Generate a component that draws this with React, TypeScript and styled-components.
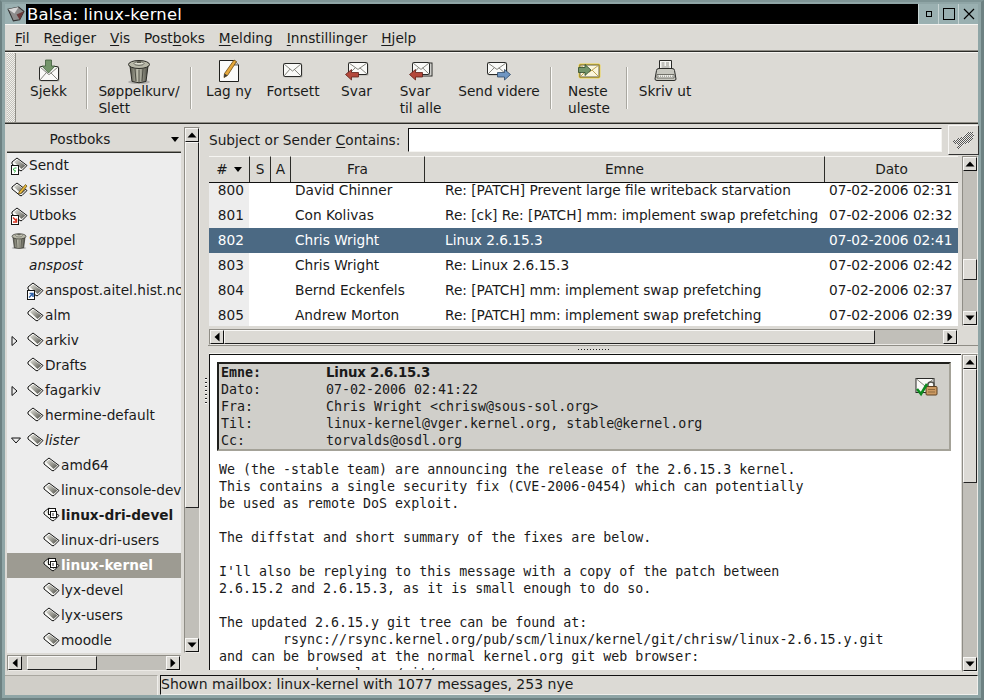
import React from 'react';
import styled, { createGlobalStyle } from 'styled-components';

const Global = createGlobalStyle`
  html, body { margin: 0; padding: 0; background: #8fa5a6; }
  * { box-sizing: border-box; }
  u { text-decoration-thickness: 1px; text-underline-offset: 2px; text-decoration-skip-ink: none; }
`;

const BG = '#dcdad5';
const TROUGH = '#c1bfb9';

const Window = styled.div`
  width: 984px; height: 700px;
  display: flex; flex-direction: column; overflow: hidden;
  background: #8fa5a6; border-right: 3px solid #6d8182; border-left: 2px solid #6d8182; border-bottom: 2px solid #6d8182;
  border-top: 2px solid #7f9596; padding: 2px 3px 3px 3px;
  font-family: "DejaVu Sans", sans-serif; font-size: 13.7px; color: #1a1a1a; line-height: 17px;
`;
const TitleBar = styled.div`
  height: 21px; flex: none; display: flex; border-bottom: 1px solid #f4f3f0; background: #000;
`;
const TitleIcon = styled.div`
  width: 21px; background: #9ab0b1; display: flex; align-items: center; justify-content: center;
`;
const TitleText = styled.div`
  flex: 1; color: #fff; font-size: 16.4px; line-height: 21px; padding-left: 1px; letter-spacing: 0.2px;
`;
const TitleButton = styled.div`
  width: 20px; background: #9ab0b1; border-left: 1px solid #c6d3d3; display: flex; align-items: center; justify-content: center; color: #000;
`;
const MenuBar = styled.div`
  height: 27px; flex: none; background: ${BG}; display: flex; gap: 14px; align-items: center; padding: 0 0 0 10px;
  border-bottom: 1px solid #2c2c28; box-shadow: inset 0 -1px 0 #8f8d86;
`;
const MenuItem = styled.span``;
const Toolbar = styled.div`
  height: 72px; flex: none; background: ${BG}; display: flex; border-bottom: 1px solid #2c2c28; border-top: 1px solid #f6f5f2;
  box-shadow: inset 0 -1px 0 #8f8d86;
`;
const Grip = styled.div`
  width: 9px; margin: 0 0 1px 2px; flex: none; border-right: 1px solid #8f8d86;
  background: conic-gradient(#c4c2bc 25%, #f1f0ec 0 50%, #c4c2bc 0 75%, #f1f0ec 0) 0 0 / 2px 2px;
`;
const ToolButton = styled.div<{ $w: number }>`
  width: ${p => p.$w}px; flex: none; display: flex; flex-direction: column; align-items: center; padding-top: 5px;
`;
const ToolIconSlot = styled.div`
  height: 25px; display: flex; align-items: center; justify-content: center;
`;
const ToolLabel = styled.div`
  white-space: pre; text-align: left; line-height: 17px;
`;
const ToolSep = styled.div`
  width: 12px; flex: none; display: flex; justify-content: center; padding: 14px 0 14px;
  &::before { content: ''; width: 2px; background: linear-gradient(to right, #a9a7a0 50%, #fbfaf8 50%); }
`;
const Body = styled.div`
  flex: 1; min-height: 0; display: flex; background: ${BG};
`;
const Sidebar = styled.div`
  width: 198px; flex: none; padding: 3px 1px 1px 2px; display: grid;
  grid-template-columns: 174px 16px; column-gap: 3px; grid-template-rows: 526px 16px; row-gap: 2px;
`;
const Tree = styled.div`
  background: #ededed; overflow: hidden; display: flex; flex-direction: column;
`;
const TreeHead = styled.div`
  height: 26px; flex: none; background: ${BG}; border-bottom: 1px solid #2c2c28; box-shadow: inset 0 -1px 0 #8f8d86;
  position: relative; text-align: center; line-height: 24px; padding-right: 28px;
`;
const HeadArrow = styled.span`
  position: absolute; right: 2px; top: 10px; width: 0; height: 0;
  border-left: 4.5px solid transparent; border-right: 4.5px solid transparent; border-top: 5px solid #000;
`;
const TreeRow = styled.div<{ $sel?: boolean; $bold?: boolean; $it?: boolean }>`
  height: 25px; flex: none; display: flex; align-items: center; padding-left: 4px; white-space: nowrap; overflow: hidden;
  background: ${p => (p.$sel ? '#9d9b92' : 'transparent')};
  color: ${p => (p.$sel ? '#fff' : '#1a1a1a')};
  font-weight: ${p => (p.$bold ? 700 : 400)};
  font-style: ${p => (p.$it ? 'italic' : 'normal')};
`;
const Indent = styled.div<{ $d: number }>`
  width: ${p => p.$d * 16}px; flex: none; display: flex; align-items: center; overflow: hidden;
`;
const TreeIconSlot = styled.div`
  width: 18px; height: 18px; flex: none; display: flex; align-items: center;
`;
const VBar = styled.div`
  background: ${TROUGH}; display: flex; flex-direction: column; border: 1px solid #8f8d86; border-right-color: #eceae6; border-bottom-color: #eceae6;
`;
const HBar = styled(VBar)`
  flex-direction: row;
`;
const ArrowBtn = styled.div`
  width: 14px; height: 14px; flex: none; background: ${BG}; display: flex; align-items: center; justify-content: center;
  border: 1px solid; border-color: #f8f7f5 #111 #111 #f8f7f5;
`;
const Thumb = styled.div<{ $size: number }>`
  flex: none; ${p => `flex-basis: ${p.$size}px;`} background: ${BG};
  border: 1px solid; border-color: #f8f7f5 #222 #222 #f8f7f5;
`;
const Spacer = styled.div<{ $size?: number }>`
  ${p => (p.$size !== undefined ? `flex: none; flex-basis: ${p.$size}px;` : 'flex: 1;')}
`;
const VHandle = styled.div`
  width: 5px; flex: none; display: flex; align-items: center; justify-content: center; padding-bottom: 13px;
  &::before { content: ''; width: 2px; height: 27px; background-image: repeating-linear-gradient(to bottom, #222 0 1px, #fff 1px 2px, transparent 2px 4px); }
`;
const Main = styled.div`
  width: 770px; flex: none; display: flex; flex-direction: column;
`;
const SearchRow = styled.div`
  height: 32px; flex: none; display: flex; align-items: center; padding-left: 1px; gap: 6px; white-space: nowrap;
`;
const SearchLabel = styled.label`
  width: 193px; flex: none;
`;
const SearchInput = styled.div`
  width: 534px; height: 24px; background: #fff; border: 1px solid; border-color: #111 #f5f4f1 #f5f4f1 #111; flex: none;
`;
const SearchButton = styled.div`
  width: 31px; height: 30px; flex: none; display: flex; align-items: center; justify-content: center; background: ${BG};
  border: 1px solid; border-color: #f8f7f5 #333 #333 #f8f7f5;
`;
const ListFrame = styled.div`
  flex: none; padding-left: 1px; display: grid; grid-template-columns: 749px 16px; column-gap: 4px; grid-template-rows: 170px 16px; row-gap: 3px;
  border-bottom: 1px solid #8f8d86; height: 190px;
`;
const Table = styled.div`
  display: flex; flex-direction: column; overflow: hidden;
`;
const cols = '41px 21px 20px 134px 400px 133px';
const HeadRow = styled.div`
  display: grid; grid-template-columns: ${cols}; height: 27px; flex: none; position: relative; z-index: 1;
  border-bottom: 1px solid #111; background: ${BG};
`;
const HeadCell = styled.div`
  display: flex; align-items: center; justify-content: center; gap: 6px; border-right: 1px solid #2c2c28; border-top: 1px solid #f6f5f2;
  &:last-child { border-right: none; }
`;
const SmallDown = styled.span`
  width: 0; height: 0; border-left: 4.5px solid transparent; border-right: 4.5px solid transparent; border-top: 5px solid #000;
`;
const Rows = styled.div`
  flex: 1; overflow: hidden; background: #fff; margin-top: -5px;
`;
const Row = styled.div<{ $sel?: boolean }>`
  display: grid; grid-template-columns: ${cols}; height: 25px; align-items: center; white-space: nowrap;
  background: ${p => (p.$sel ? '#4b6983' : '#fff')}; color: ${p => (p.$sel ? '#fff' : '#1a1a1a')};
`;
const NumCell = styled.div<{ $sel?: boolean }>`
  height: 25px; line-height: 25px; text-align: right; padding-right: 5px; background: ${p => (p.$sel ? '#4b6983' : '#ededed')};
  margin-right: 1px;
`;
const Cell = styled.div<{ $pad: number }>`
  padding-left: ${p => p.$pad}px; overflow: hidden;
`;
const HPaneHandle = styled.div`
  height: 7px; flex: none; display: flex; justify-content: center; align-items: center; padding-right: 0;
  &::before { content: ''; width: 32px; height: 3px; background-image: radial-gradient(#222 0.7px, transparent 0.8px); background-size: 3px 3px; }
`;
const Preview = styled.div`
  flex: 1; min-height: 0; margin-left: 1px; display: grid; grid-template-columns: 1fr 16px; grid-template-rows: 100%; column-gap: 1px; padding-right: 0;
  border-top: 1px solid #f6f5f2;
`;
const PreviewText = styled.div`
  background: #fff; border-top: 1px solid #111; border-left: 1px solid #111; padding: 7px 10px 0 7px; overflow: hidden; margin-bottom: 2px;
  font-family: "DejaVu Sans Mono", monospace; font-size: 13.3px; line-height: 17px; color: #1a1a1a;
`;
const HeaderBox = styled.div`
  height: 89px; background: #d0cfca; border: 2px solid; border-color: #1f1f1c #a4a298 #a4a298 #1f1f1c; padding: 0 2px; position: relative;
  display: grid; grid-template-columns: 105px 1fr; grid-auto-rows: 17px;
`;
const HLabel = styled.div<{ $bold?: boolean }>`
  font-weight: ${p => (p.$bold ? 700 : 400)};
`;
const HValue = styled.div<{ $bold?: boolean }>`
  ${p => p.$bold && 'font-family: "DejaVu Sans", sans-serif; font-weight: 700; font-size: 13.33px; letter-spacing: -0.2px;'}
`;
const SigIcon = styled.div`
  position: absolute; right: 11px; top: 13px;
`;
const MailBody = styled.pre`
  margin: 10px 0 0 2px; font: inherit; white-space: pre;
`;
const Status = styled.div`
  height: 23px; flex: none; background: ${BG}; display: flex; gap: 2px; padding-top: 3px; align-items: stretch;
`;
const StatusBlank = styled.div`
  width: 153px; flex: none; background: #d0cec8; border-top: 1px solid #a9a7a0; border-right: 1px solid #f0efec;
`;
const StatusText = styled.div`
  flex: 1; border: 1px solid; border-color: #111 #f0efec #f0efec #111; line-height: 17px; white-space: nowrap; padding-top: 0;
  font-size: 14px;
`;

const Up = () => <svg width="10" height="6" viewBox="0 0 10 6"><path d="M5 0.5L9.5 5.5H0.5Z" fill="#000" /></svg>;
const Down = () => <svg width="10" height="6" viewBox="0 0 10 6"><path d="M5 5.5L9.5 0.5H0.5Z" fill="#000" /></svg>;
const Left = () => <svg width="6" height="10" viewBox="0 0 6 10"><path d="M0.5 5L5.5 0.5V9.5Z" fill="#000" /></svg>;
const Right = () => <svg width="6" height="10" viewBox="0 0 6 10"><path d="M5.5 5L0.5 0.5V9.5Z" fill="#000" /></svg>;

const Env = ({ x = 0, y = 0, w = 18, h = 13 }: { x?: number; y?: number; w?: number; h?: number }) => (
  <g>
    <rect x={x + 1.5} y={y + 1.5} width={w} height={h} rx="1" fill="#9b9b96" opacity="0.6" />
    <rect x={x + 0.5} y={y + 0.5} width={w} height={h} rx="1" fill="#fafaf8" stroke="#2a2a28" />
    <path d={`M${x + 1} ${y + 1}L${x + w / 2 + 0.5} ${y + h * 0.62}L${x + w} ${y + 1}M${x + 1} ${y + h}L${x + w * 0.38} ${y + h * 0.48}M${x + w} ${y + h}L${x + w * 0.62} ${y + h * 0.48}`} fill="none" stroke="#77776f" strokeWidth="0.9" />
  </g>
);
const ArrowLeft = ({ x, y, c, o }: { x: number; y: number; c: string; o: string }) => (
  <path d={`M${x} ${y + 5}l6 -5v3h7v4.5h-7v3z`} fill={c} stroke={o} strokeWidth="0.8" strokeLinejoin="round" />
);
const ArrowRight = ({ x, y, c, o }: { x: number; y: number; c: string; o: string }) => (
  <path d={`M${x + 13} ${y + 5}l-6 -5v3h-7v4.5h7v3z`} fill={c} stroke={o} strokeWidth="0.8" strokeLinejoin="round" />
);

const Check = () => (
  <svg width="22" height="23" viewBox="0 0 22 23">
    <Env x={1} y={7} w={19} h={14} />
    <path d="M7.500 1h6v6h3.500l-6.500 7-6.500-7h3.500z" fill="#74956a" stroke="#3f5a3b" strokeWidth="0.8" />
  </svg>
);
const Trash = ({ s = 24 }: { s?: number }) => (
  <svg width={s} height={s * 26 / 24} viewBox="0 0 24 26">
    <defs>
      <linearGradient id="tr" x1="0" x2="1" y1="0" y2="0">
        <stop offset="0" stopColor="#55554a" /><stop offset="0.45" stopColor="#c4c4b4" /><stop offset="1" stopColor="#4d4d44" />
      </linearGradient>
    </defs>
    <ellipse cx="12" cy="24" rx="11" ry="2" fill="#888" opacity="0.5" />
    <path d="M3 8L5 23.500Q12 26 19 23.500L21 8Z" fill="url(#tr)" stroke="#2b2b26" />
    <path d="M8 11l1 12M12 11.500v12.500M16 11l-1 12" stroke="#4c4c42" fill="none" />
    <ellipse cx="12" cy="6.500" rx="10.500" ry="4" fill="#b8b8a8" stroke="#2b2b26" />
    <ellipse cx="12" cy="5.500" rx="5" ry="1.800" fill="#deded0" stroke="#45453d" strokeWidth="0.8" />
    <path d="M10 3.500h4v1.500h-4z" fill="#55554a" />
  </svg>
);
const NewNote = () => (
  <svg width="24" height="25" viewBox="0 0 24 25">
    <path d="M2.500 2.500H17L21.500 7V23.500H2.500Z" fill="#fbfbf9" stroke="#1f1f1c" />
    <path d="M17 2.500V7H21.500" fill="#cfcfc9" stroke="#1f1f1c" strokeWidth="0.7" />
    <path d="M17 2L19.500 3.500L10.500 17.500L7 19.500L7.500 15.500Z" fill="#e6a83a" stroke="#6a4a12" strokeWidth="0.8" />
    <path d="M7.500 15.500L7 19.500L10.500 17.500" fill="#3a3a36" />
  </svg>
);
const ReplyIcon = ({ all }: { all?: boolean }) => (
  <svg width="24" height="20" viewBox="0 0 24 20">
    {all && <rect x="5" y="2" width="18" height="13" fill="#e8e8e4" stroke="#2a2a28" />}
    <Env x={3} y={1} w={all ? 17 : 19} h={12} />
    <ArrowLeft x={0.5} y={8.5} c="#b4483b" o="#5f1f18" />
  </svg>
);
const ForwardIcon = () => (
  <svg width="24" height="20" viewBox="0 0 24 20">
    <Env x={0} y={1} w={19} h={12} />
    <ArrowRight x={10.5} y={8.5} c="#6f96c2" o="#2c4866" />
  </svg>
);
const NextIcon = () => (
  <svg width="23" height="17" viewBox="0 0 23 17">
    <rect x="0.500" y="1.500" width="22" height="15" rx="2" fill="#f2d648" />
    <rect x="2" y="3" width="19" height="12" fill="#fbf6dc" stroke="#3a3a2a" strokeWidth="0.8" />
    <path d="M2 3L11.500 10L21 3M2 15L9 8M21 15L14 8" fill="none" stroke="#b59c48" strokeWidth="0.9" />
    <path d="M13 8l-6 -5.500v3h-6.500v5h6.500v3z" fill="#74956a" stroke="#2f4a2c" strokeWidth="0.8" />
  </svg>
);
const Printer = () => (
  <svg width="23" height="23" viewBox="0 0 23 23">
    <path d="M5.500 1.500H17.500V11H5.500Z" fill="#f5f5f2" stroke="#2a2a28" />
    <path d="M7.500 4h3M12 4h3M7.500 6h3M12 6h3M7.500 8h8" stroke="#8a8a84" />
    <path d="M2.500 11.500Q2.500 9.500 5 9.500H18Q20.500 9.500 20.500 11.500L22 20Q22 21.500 20 21.500H3Q1 21.500 1 20Z" fill="#c8c8c0" stroke="#2a2a28" />
    <path d="M3 15.500H20V19H3Z" fill="#efefe9" stroke="#55554e" strokeWidth="0.8" />
    <path d="M4 17.200h15" stroke="#8a8a84" strokeDasharray="1 1" />
  </svg>
);
const Book = () => (
  <g>
    <defs>
      <linearGradient id="bk" x1="0" y1="0" x2="1" y2="1">
        <stop offset="0" stopColor="#e4e4dc" /><stop offset="1" stopColor="#4f4f48" />
      </linearGradient>
    </defs>
    <path d="M1 5L6 1L16 8.500L11 13.500Q10 14 9 13.500L1 7Z" fill="#fbfbf8" stroke="#111" strokeLinejoin="round" />
    <path d="M3 5L6.300 2.500L14.500 8.500L10.500 12Z" fill="url(#bk)" />
  </g>
);
const Mailbox = ({ badge }: { badge?: string }) => (
  <svg width="17" height="18" viewBox="0 0 17 18">
    <Book />
    {badge === 'sent' && <g><rect x="0.500" y="8.500" width="7" height="9" fill="#fff" stroke="#151513" /><path d="M5.500 11Q3 10.500 2.500 12T4 13.500T3 15.500" fill="none" stroke="#39b54a" strokeWidth="1" /></g>}
    {badge === 'out' && <g><rect x="0.500" y="8.500" width="7" height="9" fill="#fff" stroke="#151513" /><path d="M2 10.500L5.500 14M5.500 11.500V15H2" fill="none" stroke="#d6321f" strokeWidth="1.500" /></g>}
    {badge === 'link' && <g><rect x="0.500" y="8.500" width="7" height="9" fill="#fff" stroke="#151513" /><path d="M2 15.500L5.500 12M2.500 11.500H6V15" fill="none" stroke="#2f62a8" strokeWidth="1.500" /></g>}
    {badge === 'draft' && <path d="M8 10L14.500 2.500L16 4L10 11.500L7.500 12Z" fill="#e8b93a" stroke="#5a4410" strokeWidth="0.7" />}
    {badge === 'new' && <g><rect x="5.500" y="1.500" width="7" height="6" fill="#fff" stroke="#151513" /><rect x="7.500" y="4.500" width="6" height="6" fill="#fff" stroke="#151513" /><path d="M10 6v3" stroke="#333" /></g>}
  </svg>
);
const HandIcon = () => (
  <svg width="21" height="18" viewBox="0 0 21 18" shapeRendering="crispEdges">
    <defs>
      <pattern id="dith" width="2" height="2" patternUnits="userSpaceOnUse">
        <rect width="2" height="2" fill="#efeeea" /><rect width="1" height="1" fill="#555" /><rect x="1" y="1" width="1" height="1" fill="#555" />
      </pattern>
    </defs>
    <path d="M0 10L6 7L10 6L14 1H20L21 5L17 12L11 13L6 18H4L5 14L2 13Z" fill="url(#dith)" />
  </svg>
);
const SigSvg = () => (
  <svg width="23" height="21" viewBox="0 0 23 21">
    <rect x="1" y="1.500" width="18" height="14" fill="#fafaf8" stroke="#2a2a28" />
    <path d="M1.500 2L10 9L18.500 2" fill="none" stroke="#88887f" />
    <path d="M13 9V7.500Q13 5 16 5T19 7.500V9" fill="none" stroke="#55554e" strokeWidth="1.500" />
    <rect x="11" y="9.500" width="11" height="8.500" rx="1" fill="#cc9a62" stroke="#5d4020" />
    <path d="M13 12.500h7M13 15h7" stroke="#8f6a3e" />
    <path d="M2 12L6 17L12 7" fill="none" stroke="#0d8a1f" strokeWidth="2.600" />
  </svg>
);
const Expander = ({ open }: { open?: boolean }) =>
  open ? (
    <svg width="10" height="7" viewBox="0 0 10 7"><path d="M0.500 1H9.500L5 6Z" fill="#ededed" stroke="#111" /></svg>
  ) : (
    <svg width="7" height="10" viewBox="0 0 7 10"><path d="M1 0.500V9.500L6 5Z" fill="#ededed" stroke="#111" /></svg>
  );

const menus: [string, string, string][] = [
  ['', 'F', 'il'], ['R', 'e', 'diger'], ['', 'V', 'is'], ['Post', 'b', 'oks'],
  ['', 'M', 'elding'], ['', 'I', 'nnstillinger'], ['', 'H', 'jelp'],
];

type Tool = { w: number; label: string; icon: React.ReactNode } | { sep: true };
const tools: Tool[] = [
  { w: 65, label: 'Sjekk', icon: <Check /> },
  { sep: true },
  { w: 92, label: 'Søppelkurv/\nSlett', icon: <Trash /> },
  { sep: true },
  { w: 64, label: 'Lag ny', icon: <NewNote /> },
  { w: 64, label: 'Fortsett', icon: <svg width="21" height="17" viewBox="0 0 21 17"><Env x={0} y={1} w={18} h={13} /></svg> },
  { w: 63, label: 'Svar', icon: <ReplyIcon /> },
  { w: 65, label: 'Svar\ntil alle', icon: <ReplyIcon all /> },
  { w: 92, label: 'Send videre', icon: <ForwardIcon /> },
  { sep: true },
  { w: 64, label: 'Neste\nuleste', icon: <NextIcon /> },
  { sep: true },
  { w: 64, label: 'Skriv ut', icon: <Printer /> },
];

type Box = { name: string; d: number; icon?: string; exp?: 'open' | 'closed'; bold?: boolean; it?: boolean; sel?: boolean };
const boxes: Box[] = [
  { name: 'Sendt', d: 0, icon: 'sent' },
  { name: 'Skisser', d: 0, icon: 'draft' },
  { name: 'Utboks', d: 0, icon: 'out' },
  { name: 'Søppel', d: 0, icon: 'trash' },
  { name: 'anspost', d: 0, icon: 'none', it: true },
  { name: 'anspost.aitel.hist.no', d: 1, icon: 'link' },
  { name: 'alm', d: 1 },
  { name: 'arkiv', d: 1, exp: 'closed' },
  { name: 'Drafts', d: 1 },
  { name: 'fagarkiv', d: 1, exp: 'closed' },
  { name: 'hermine-default', d: 1 },
  { name: 'lister', d: 1, exp: 'open', it: true },
  { name: 'amd64', d: 2 },
  { name: 'linux-console-devel', d: 2 },
  { name: 'linux-dri-devel', d: 2, icon: 'new', bold: true },
  { name: 'linux-dri-users', d: 2 },
  { name: 'linux-kernel', d: 2, icon: 'new', bold: true, sel: true },
  { name: 'lyx-devel', d: 2 },
  { name: 'lyx-users', d: 2 },
  { name: 'moodle', d: 2 },
];

const msgs = [
  ['800', 'David Chinner', 'Re: [PATCH] Prevent large file writeback starvation', '07-02-2006 02:31'],
  ['801', 'Con Kolivas', 'Re: [ck] Re: [PATCH] mm: implement swap prefetching', '07-02-2006 02:32'],
  ['802', 'Chris Wright', 'Linux 2.6.15.3', '07-02-2006 02:41'],
  ['803', 'Chris Wright', 'Re: Linux 2.6.15.3', '07-02-2006 02:42'],
  ['804', 'Bernd Eckenfels', 'Re: [PATCH] mm: implement swap prefetching', '07-02-2006 02:37'],
  ['805', 'Andrew Morton', 'Re: [PATCH] mm: implement swap prefetching', '07-02-2006 02:39'],
];

const mail = `We (the -stable team) are announcing the release of the 2.6.15.3 kernel.
This contains a single security fix (CVE-2006-0454) which can potentially
be used as remote DoS exploit.

The diffstat and short summary of the fixes are below.

I'll also be replying to this message with a copy of the patch between
2.6.15.2 and 2.6.15.3, as it is small enough to do so.

The updated 2.6.15.y git tree can be found at:
        rsync://rsync.kernel.org/pub/scm/linux/kernel/git/chrisw/linux-2.6.15.y.git
and can be browsed at the normal kernel.org git web browser:
        www.kernel.org/git/`;

export default function App() {
  return (
    <Window>
      <Global />
      <TitleBar>
        <TitleIcon>
          <svg width="18" height="16" viewBox="0 0 17 15">
            <path d="M1 3L11 1L16 5L12 13L6 14Z" fill="#8d8d8d" stroke="#333" />
            <path d="M1 3L11 1L7 7Z" fill="#d8d8d8" />
            <path d="M12 13L16 5L9 8Z" fill="#6b3a3a" />
          </svg>
        </TitleIcon>
        <TitleText>Balsa: linux-kernel</TitleText>
        <TitleButton><svg width="8" height="8" viewBox="0 0 8 8"><rect x="1.500" y="1.500" width="5" height="5" fill="none" stroke="#000" /></svg></TitleButton>
        <TitleButton><svg width="14" height="14" viewBox="0 0 14 14"><rect x="1.500" y="1.500" width="11" height="11" fill="none" stroke="#000" /></svg></TitleButton>
        <TitleButton><svg width="12" height="12" viewBox="0 0 12 12"><path d="M1 1L11 11M11 1L1 11" stroke="#000" strokeWidth="1.200" /></svg></TitleButton>
      </TitleBar>
      <MenuBar>
        {menus.map(([a, u, b]) => (
          <MenuItem key={u + b}>{a}<u>{u}</u>{b}</MenuItem>
        ))}
      </MenuBar>
      <Toolbar>
        <Grip />
        {tools.map((t, i) =>
          'sep' in t ? (
            <ToolSep key={i} />
          ) : (
            <ToolButton key={i} $w={t.w}>
              <ToolIconSlot>{t.icon}</ToolIconSlot>
              <ToolLabel>{t.label}</ToolLabel>
            </ToolButton>
          )
        )}
      </Toolbar>
      <Body>
        <Sidebar>
          <Tree>
            <TreeHead>Postboks<HeadArrow /></TreeHead>
            {boxes.map(b => (
              <TreeRow key={b.name} $sel={b.sel} $bold={b.bold} $it={b.it}>
                <Indent $d={b.d}>{b.exp && <Expander open={b.exp === 'open'} />}</Indent>
                <TreeIconSlot>
                  {b.icon === 'trash' ? <Trash s={16} /> : b.icon === 'none' ? null : <Mailbox badge={b.icon} />}
                </TreeIconSlot>
                {b.name}
              </TreeRow>
            ))}
          </Tree>
          <VBar>
            <ArrowBtn><Up /></ArrowBtn>
            <Thumb $size={366} />
            <Spacer />
            <ArrowBtn><Down /></ArrowBtn>
          </VBar>
          <HBar>
            <ArrowBtn><Left /></ArrowBtn>
            <Spacer $size={5} />
            <Thumb $size={70} />
            <Spacer />
            <ArrowBtn><Right /></ArrowBtn>
          </HBar>
        </Sidebar>
        <VHandle />
        <Main>
          <SearchRow>
            <SearchLabel>Subject or Sender <u>C</u>ontains:</SearchLabel>
            <SearchInput />
            <SearchButton><HandIcon /></SearchButton>
          </SearchRow>
          <ListFrame>
            <Table>
              <HeadRow>
                <HeadCell># <SmallDown /></HeadCell>
                <HeadCell>S</HeadCell>
                <HeadCell>A</HeadCell>
                <HeadCell>Fra</HeadCell>
                <HeadCell>Emne</HeadCell>
                <HeadCell>Dato</HeadCell>
              </HeadRow>
              <Rows>
                {msgs.map(m => {
                  const sel = m[0] === '802';
                  return (
                    <Row key={m[0]} $sel={sel}>
                      <NumCell $sel={sel}>{m[0]}</NumCell>
                      <span />
                      <span />
                      <Cell $pad={4}>{m[1]}</Cell>
                      <Cell $pad={20}>{m[2]}</Cell>
                      <Cell $pad={4}>{m[3]}</Cell>
                    </Row>
                  );
                })}
              </Rows>
            </Table>
            <VBar>
              <ArrowBtn><Up /></ArrowBtn>
              <Spacer $size={88} />
              <Thumb $size={21} />
              <Spacer />
              <ArrowBtn><Down /></ArrowBtn>
            </VBar>
            <HBar>
              <ArrowBtn><Left /></ArrowBtn>
              <Thumb $size={651} />
              <Spacer />
              <ArrowBtn><Right /></ArrowBtn>
            </HBar>
          </ListFrame>
          <HPaneHandle />
          <Preview>
            <PreviewText>
              <HeaderBox>
                <HLabel $bold>Emne:</HLabel><HValue $bold>Linux 2.6.15.3</HValue>
                <HLabel>Dato:</HLabel><HValue>07-02-2006 02:41:22</HValue>
                <HLabel>Fra:</HLabel><HValue>Chris Wright &lt;chrisw@sous-sol.org&gt;</HValue>
                <HLabel>Til:</HLabel><HValue>linux-kernel@vger.kernel.org, stable@kernel.org</HValue>
                <HLabel>Cc:</HLabel><HValue>torvalds@osdl.org</HValue>
                <SigIcon><SigSvg /></SigIcon>
              </HeaderBox>
              <MailBody>{mail}</MailBody>
            </PreviewText>
            <VBar>
              <ArrowBtn><Up /></ArrowBtn>
              <Thumb $size={114} />
              <Spacer />
              <ArrowBtn><Down /></ArrowBtn>
            </VBar>
          </Preview>
        </Main>
      </Body>
      <Status>
        <StatusBlank />
        <StatusText>Shown mailbox: linux-kernel with 1077 messages, 253 nye</StatusText>
      </Status>
    </Window>
  );
}
